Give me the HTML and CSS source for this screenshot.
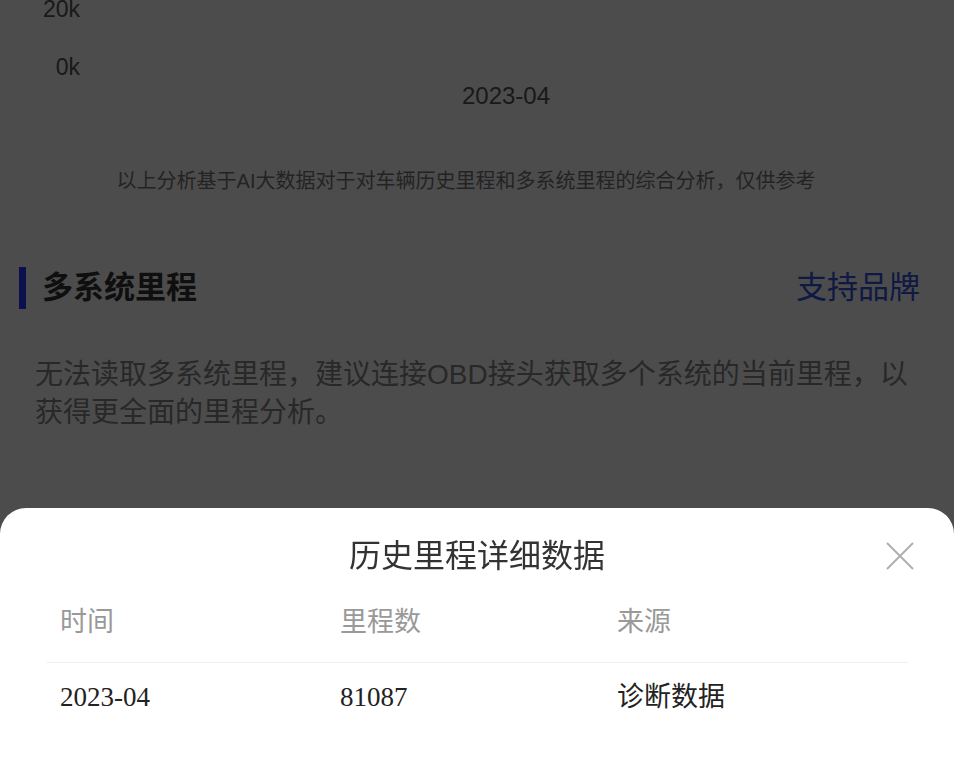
FILE: index.html
```html
<!DOCTYPE html>
<html lang="zh-CN">
<head>
    <meta charset="UTF-8">
    <meta name="viewport" content="width=device-width, initial-scale=1.0">
    <title>里程分析</title>
    <link rel="stylesheet" href="styles.css">
</head>
<body>
    <div class="page">
        <div class="chart">
            <div class="chart-y">
                <span>20k</span>
                <span>0k</span>
            </div>
            <div class="chart-x">2023-04</div>
        </div>
        <p class="chart-note">以上分析基于AI大数据对于对车辆历史里程和多系统里程的综合分析，仅供参考</p>

        <div class="section">
            <div class="section-head">
                <h2 class="section-title">多系统里程</h2>
                <a class="section-link" href="#">支持品牌</a>
            </div>
            <p class="section-desc">无法读取多系统里程，建议连接OBD接头获取多个系统的当前里程，以获得更全面的里程分析。</p>
        </div>
    </div>

    <!-- popup: history detail -->
    <div class="mask"></div>
    <div class="sheet">
        <div class="sheet-head">
            <h3 class="sheet-title">历史里程详细数据</h3>
            <button class="sheet-close" aria-label="关闭">
                <svg viewBox="0 0 28 28" fill="none" stroke="currentColor" stroke-width="2">
                    <path d="M1 1L27 27M27 1L1 27" />
                </svg>
            </button>
        </div>
        <div class="table">
            <div class="table-row table-head">
                <span>时间</span>
                <span>里程数</span>
                <span>来源</span>
            </div>
            <div class="table-row">
                <span class="num">2023-04</span>
                <span class="num">81087</span>
                <span>诊断数据</span>
            </div>
        </div>
    </div>
</body>
</html>
```

FILE: styles.css
```css
body {
    font-family: "Liberation Sans", "Noto Sans CJK SC", sans-serif;
    margin: 0;
    padding: 0;
    background-color: #fff;
    color: #333;
    overflow: hidden;
}
.page {
    margin-top: -5px;
}
.chart-y {
    width: 80px;
    display: flex;
    flex-direction: column;
    align-items: flex-end;
    gap: 30px;
    font-size: 23px;
    line-height: 28px;
    color: #555;
}
.chart-x {
    margin-top: 1px;
    padding: 0 32px 0 90px;
    text-align: center;
    font-size: 24px;
    line-height: 28px;
    color: #555;
}
.chart-note {
    margin: 57px 0 0;
    padding: 0 44px 0 22px;
    text-align: center;
    font-size: 20px;
    line-height: 28px;
    color: #777;
}
.section-head {
    margin-top: 72px;
    padding: 0 34px 0 19px;
    display: flex;
    align-items: center;
    justify-content: space-between;
}
.section-title {
    margin: 0;
    padding-left: 16px;
    border-left: 7px solid #1f3cff;
    font-size: 31px;
    line-height: 42px;
    font-weight: 700;
    color: #333;
}
.section-link {
    font-size: 31px;
    line-height: 42px;
    color: #3354e0;
    text-decoration: none;
}
.section-desc {
    margin: 47px 0 0;
    padding: 0 33px 0 35px;
    font-size: 28px;
    line-height: 38px;
    color: #888;
}
.mask {
    position: fixed;
    inset: 0;
    background-color: rgba(0, 0, 0, 0.7);
}
.sheet {
    position: fixed;
    left: 0;
    right: 0;
    bottom: 0;
    height: 250px;
    background-color: #fff;
    border-radius: 26px 26px 0 0;
}
.sheet-head {
    position: relative;
    padding-top: 26px;
}
.sheet-title {
    margin: 0;
    text-align: center;
    font-size: 32px;
    line-height: 44px;
    font-weight: 400;
    color: #333;
}
.sheet-close {
    position: absolute;
    top: 34px;
    right: 40px;
    width: 28px;
    height: 28px;
    padding: 0;
    border: none;
    background: none;
    color: #b0b0b0;
}
.sheet-close svg {
    display: block;
    width: 28px;
    height: 28px;
}
.table {
    margin: 0 46px;
}
.table-row {
    display: grid;
    grid-template-columns: 280px 277px 1fr;
    padding: 14px 0 14px 14px;
    font-size: 27px;
    line-height: 40px;
    color: #222;
}
.table-head {
    padding: 24px 0 20px 14px;
    border-bottom: 1px solid #f0f0f0;
    color: #999;
}
.num {
    font-family: "Liberation Serif", "Noto Sans CJK SC", serif;
}
```
